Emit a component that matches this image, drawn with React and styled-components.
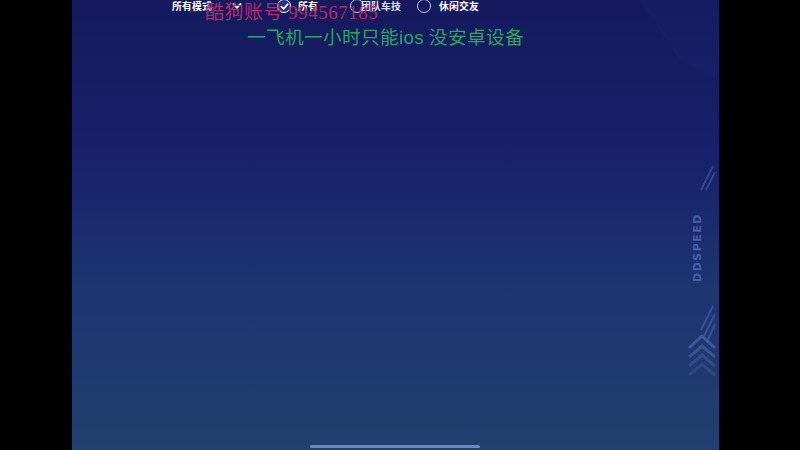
import React from "react";
import styled, { createGlobalStyle } from "styled-components";

const GlobalStyle = createGlobalStyle`
  html, body { margin: 0; padding: 0; background: #000; }
  body { font-family: "Noto Sans CJK SC", "Noto Sans", sans-serif; }
`;

const Screen = styled.div`
  width: 800px;
  height: 450px;
  background: #000;
  display: flex;
  overflow: hidden;
`;

const Panel = styled.div`
  position: relative;
  margin-left: 72px;
  width: 647px;
  height: 450px;
  background: linear-gradient(180deg, #141a5c 0%, #18216a 35%, #1d3470 62%, #223f6e 100%);
  display: flex;
  flex-direction: column;
  overflow: hidden;
`;

const TopBar = styled.div`
  display: flex;
  align-items: center;
  height: 14px;
  margin-top: -1px;
  padding-left: 100px;
`;

const Label = styled.span`
  color: #fff;
  font-size: 9.8px;
  font-weight: 700;
  letter-spacing: 0.2px;
  white-space: nowrap;
  margin-left: ${(p) => p.$ml || 0}px;
  opacity: ${(p) => (p.$dim ? 0.85 : 1)};
`;

const Radio = styled.span`
  display: inline-flex;
  flex: none;
  align-items: center;
  justify-content: center;
  width: 14px;
  height: 14px;
  border-radius: 50%;
  border: 1.2px solid ${(p) => (p.$on ? "#fff" : "#c8c8e8")};
  background: ${(p) => (p.$on ? "#2a2f8a" : "transparent")};
  margin-left: ${(p) => p.$ml || 0}px;
  box-sizing: border-box;
`;

const Overlay = styled.div`
  position: absolute;
  left: 133px;
  top: -3px;
  color: #b42a6c;
  font-family: "Liberation Serif", "Noto Sans CJK SC", serif;
  font-size: 19px;
  white-space: nowrap;
  letter-spacing: 0.5px;
`;

const Notice = styled.div`
  margin-top: 9px;
  padding-left: 175px;
  color: #2fa35e;
  font-family: "Liberation Serif", "Noto Sans CJK SC", serif;
  font-size: 18.6px;
  white-space: nowrap;
  letter-spacing: 0.4px;
  span { font-family: "Liberation Sans", sans-serif; }
`;

const Deco = styled.svg`
  position: absolute;
  pointer-events: none;
`;

const HomeBar = styled.div`
  position: absolute;
  left: 238px;
  bottom: 2px;
  width: 170px;
  height: 3px;
  border-radius: 2px;
  background: #6f86c0;
`;

const Check = () => (
  <svg width="9" height="9" viewBox="0 0 10 10">
    <path d="M1.5 5.2 L4 7.6 L8.6 2.4" stroke="#fff" strokeWidth="1.8" fill="none" strokeLinecap="round" strokeLinejoin="round" />
  </svg>
);

const Chevron = () => (
  <svg width="10" height="8" viewBox="0 0 10 8" style={{ marginLeft: 20, flex: "none" }}>
    <path d="M1.5 2 L5 5.5 L8.5 2" stroke="#fff" strokeWidth="2" fill="none" strokeLinecap="round" />
  </svg>
);

export default function App() {
  return (
    <>
      <GlobalStyle />
      <Screen>
        <Panel>
          <Deco width="110" height="100" style={{ right: 0, top: 0 }} viewBox="0 0 110 100">
            <polygon points="30,0 110,0 110,80 70,60" fill="#1f2a78" opacity="0.2" />
          </Deco>
          <TopBar>
            <Label>所有模式</Label>
            <Chevron />
            <Radio $on $ml={35}><Check /></Radio>
            <Label $ml={7}>所有</Label>
            <Radio $ml={32} />
            <Label $ml={-3} $dim>团队车技</Label>
            <Radio $ml={16} />
            <Label $ml={8}>休闲交友</Label>
          </TopBar>
          <Overlay>酷狗账号 994567185</Overlay>
          <Notice>一飞机一小时只能<span>ios</span> 没安卓设备</Notice>

          <Deco width="30" height="230" style={{ right: 2, top: 160 }} viewBox="0 0 30 230">
            <g stroke="#3a4f9a" strokeWidth="2" opacity="0.8">
              <line x1="14" y1="30" x2="26" y2="6" />
              <line x1="19" y1="30" x2="28" y2="12" />
            </g>
            <text x="0" y="0" transform="translate(14 122) rotate(-90)" fill="#4a5fa8" fontSize="11" fontWeight="700" fontFamily="DejaVu Sans, sans-serif" letterSpacing="1.5">DDSPEED</text>
            <g stroke="#3d5aa0" strokeWidth="2" opacity="0.8">
              <line x1="14" y1="170" x2="26" y2="146" />
              <line x1="17" y1="176" x2="28" y2="154" />
              <line x1="20" y1="182" x2="28" y2="164" />
            </g>
            <g fill="none" stroke="#4a66a8" strokeWidth="3" opacity="0.75">
              <path d="M2 188 L15 176 L28 188" />
              <path d="M2 197 L15 186 L28 197" opacity="0.8" />
              <path d="M2 206 L15 195 L28 206" opacity="0.6" />
              <path d="M2 215 L15 204 L28 215" opacity="0.45" />
            </g>
          </Deco>
          <HomeBar />
        </Panel>
      </Screen>
    </>
  );
}
